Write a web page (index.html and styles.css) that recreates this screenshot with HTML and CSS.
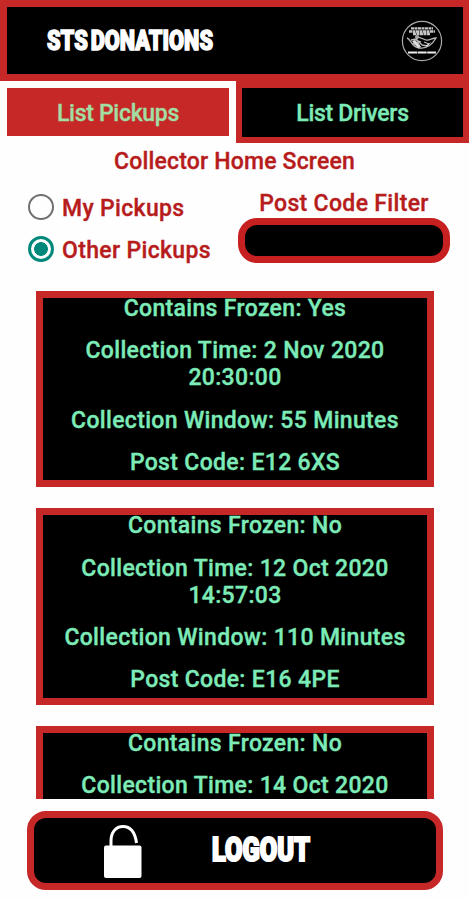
FILE: index.html
```html
<!DOCTYPE html>
<html lang="en">
<head>
<meta charset="utf-8">
<title>STS Donations</title>
<link rel="stylesheet" href="styles.css">
</head>
<body>
<div class="app">
  <header class="header">
    <svg class="brand" width="180" height="40" viewBox="0 0 180 40"><text x="5" y="29" textLength="166" lengthAdjust="spacingAndGlyphs">STS DONATIONS</text></svg>
    <svg class="logo" width="42" height="42" viewBox="0 0 42 42" fill="none">
      <circle cx="21" cy="21" r="19.6" stroke="#aaa" stroke-width="1.2"/>
      <path d="M10 8.3h22M8 11.5h26M12 14h17" stroke="#c4c4c4" stroke-width="2.3" stroke-dasharray="3 .5"/>
      <path d="M6 18c4 1 4 9 12 10 7 1 13-3 17-10-4 0-7 3-10 2l-8-3-2 3 5 2M10 20l5-1 6 6M12 23l6 4M16 21l3 6M23 22l5 2M21 25l5 1" stroke="#b8b8b8" stroke-width="1.3"/>
      <path d="M11 21l3-1 6 7-3 1zM24 26l6-4-3 4z" fill="#ddd"/>
      <circle cx="16" cy="17" r="2" fill="#aaa"/>
      <path d="M7 32.5h28" stroke="#eee" stroke-width="1.8" stroke-dasharray="9 .6"/>
    </svg>
  </header>
  <nav class="tabs">
    <div class="tab active">List Pickups</div>
    <div class="tab">List Drivers</div>
  </nav>
  <h1 class="title">Collector Home Screen</h1>
  <section class="filters">
    <div class="radios">
      <div class="option"><span class="radio"></span><span class="option-text">My Pickups</span></div>
      <div class="option"><span class="radio on"></span><span class="option-text">Other Pickups</span></div>
    </div>
    <div class="postcode">
      <div class="label">Post Code Filter</div>
      <div class="field"></div>
    </div>
  </section>
  <main class="list">
    <article class="card">
      <p>Contains Frozen: Yes</p>
      <p>Collection Time: 2 Nov 2020<br>20:30:00</p>
      <p>Collection Window: 55 Minutes</p>
      <p>Post Code: E12 6XS</p>
    </article>
    <article class="card">
      <p>Contains Frozen: No</p>
      <p>Collection Time: 12 Oct 2020<br>14:57:03</p>
      <p>Collection Window: 110 Minutes</p>
      <p>Post Code: E16 4PE</p>
    </article>
    <article class="card">
      <p>Contains Frozen: No</p>
      <p>Collection Time: 14 Oct 2020</p>
    </article>
  </main>
  <div class="logout">
    <svg class="lock" width="40" height="56" viewBox="0 0 40 56">
      <path d="M7 24V18C7 9 12 3.5 19 3.5S31 9 32.500 20" fill="none" stroke="#fff" stroke-width="3"/>
      <rect x="0" y="22.500" width="37.500" height="32.500" rx="2" fill="#fff"/>
    </svg>
    <svg class="logout-text" width="116" height="44" viewBox="0 0 116 44"><text x="6" y="32" textLength="98" lengthAdjust="spacingAndGlyphs">LOGOUT</text></svg>
  </div>
</div>
</body>
</html>
```
FILE: styles.css
```css
* { box-sizing: border-box; }
body { margin: 0; background: #fefefe; }
.app {
  width: 469px;
  height: 900px;
  overflow: hidden;
  display: flex;
  flex-direction: column;
  font: 500 23px/27px Roboto, sans-serif;
  letter-spacing: 0.33px;
  -webkit-text-stroke: 0.35px currentColor;
  color: #b71c1c;
}
.header {
  height: 81px;
  flex: none;
  border: 7px solid #c62828;
  border-right-width: 6px;
  background: #000;
  display: flex;
  justify-content: space-between;
  align-items: center;
  padding: 0 20px 0 35px;
}
.brand, .logout-text { overflow: visible; }
.brand text, .logout-text text {
  font-family: Roboto, sans-serif;
  font-weight: 900;
  letter-spacing: 0;
  fill: #fff;
  -webkit-text-stroke: 0;
  stroke: #fff;
  stroke-width: 1.5px;
}
.brand text { font-size: 27px; word-spacing: -3px; }
.logout-text text { font-size: 33px; stroke-width: 2.2px; }
.tabs { display: flex; height: 62px; flex: none; letter-spacing: -0.3px; }
.tab {
  width: 233px;
  border: 7px solid #c62828;
  border-width: 7px 6px 6px;
  background: #000;
  color: #7debb8;
  text-align: center;
  line-height: 51px;
}
.tab.active {
  width: 236px;
  border: 7px solid #fefefe;
  background: #c62828;
  color: #a2dda3;
}
.title { margin: 5px 0 0; font: inherit; letter-spacing: 0.18px; text-align: center; }
.filters { display: flex; height: 116px; flex: none; padding-top: 15px; }
.radios { width: 238px; padding-left: 28px; }
.option { display: flex; align-items: center; gap: 8px; height: 42px; }
.option-text { padding-top: 2px; }
.radios .option:first-child { margin-top: -4px; }
.radio {
  width: 26px;
  height: 26px;
  border: 2px solid #707070;
  border-radius: 50%;
}
.radio.on {
  border: 3px solid #00897b;
  background: radial-gradient(circle, #00897b 6.5px, transparent 7.2px);
}
.postcode { width: 212px; text-align: center; }
.field {
  height: 45px;
  margin-top: 1px;
  background: #000;
  border: 7px solid #c62020;
  border-radius: 19px;
}
.list { height: 508px; flex: none; overflow: hidden; padding: 0 35px 0 36px; }
.card {
  height: 196.3px;
  margin-bottom: 21.2px;
  border: 7px solid #c62828;
  background: #000;
  color: #7debb8;
  text-align: center;
}
.card p { margin: 0 0 15.3px; position: relative; top: -3px; }
.logout {
  width: 416px;
  height: 79px;
  margin: 12px 0 0 27px;
  flex: none;
  border: 7px solid #c62828;
  border-radius: 19px;
  background: #000;
  display: flex;
  align-items: center;
  padding-left: 70px;
}
.logout-text { margin-left: 62px; }
```
